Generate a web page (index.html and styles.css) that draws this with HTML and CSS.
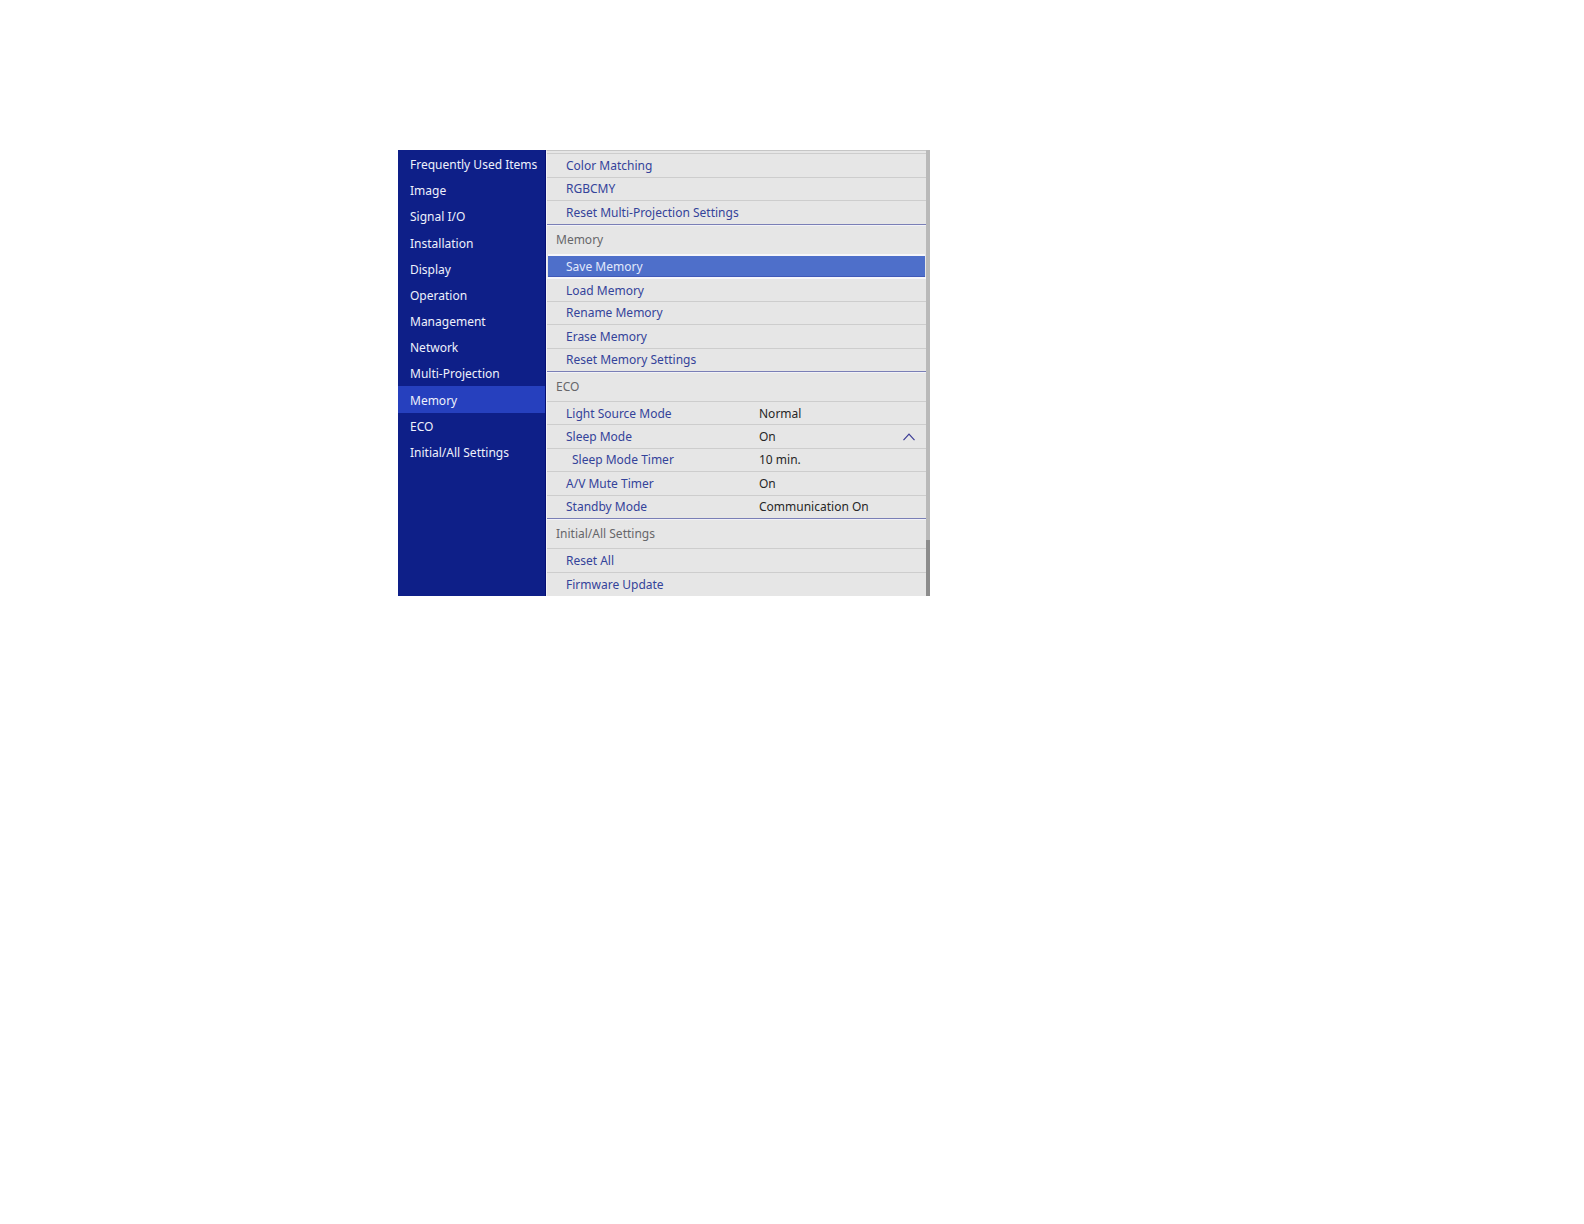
FILE: index.html
```html
<!DOCTYPE html>
<html lang="en">
<head>
    <meta charset="UTF-8">
    <title>Projector Menu</title>
    <link rel="stylesheet" href="styles.css">
</head>
<body>
    <main class="menu">
        <nav class="sidebar">
            <ul class="sidebar-list">
                <li><a href="#frequent">Frequently Used Items</a></li>
                <li><a href="#image">Image</a></li>
                <li><a href="#signal">Signal I/O</a></li>
                <li><a href="#installation">Installation</a></li>
                <li><a href="#display">Display</a></li>
                <li><a href="#operation">Operation</a></li>
                <li><a href="#management">Management</a></li>
                <li><a href="#network">Network</a></li>
                <li><a href="#multi-projection">Multi-Projection</a></li>
                <li><a href="#memory" class="active">Memory</a></li>
                <li><a href="#eco">ECO</a></li>
                <li><a href="#initial">Initial/All Settings</a></li>
            </ul>
        </nav>

        <div class="content">
            <!-- Multi-Projection (end of the section) -->
            <section class="section section-cut" id="multi-projection">
                <button type="button" class="row">Color Matching</button>
                <button type="button" class="row">RGBCMY</button>
                <button type="button" class="row">Reset Multi-Projection Settings</button>
            </section>

            <!-- Memory -->
            <section class="section section-full" id="memory">
                <h2>Memory</h2>
                <button type="button" class="row selected">Save Memory</button>
                <button type="button" class="row">Load Memory</button>
                <button type="button" class="row">Rename Memory</button>
                <button type="button" class="row">Erase Memory</button>
                <button type="button" class="row">Reset Memory Settings</button>
            </section>

            <!-- ECO -->
            <section class="section section-full" id="eco">
                <h2>ECO</h2>
                <button type="button" class="row"><span>Light Source Mode</span><span class="value">Normal</span></button>
                <button type="button" class="row" aria-expanded="true">
                    <span>Sleep Mode</span>
                    <span class="value">On</span>
                    <svg class="chevron" width="12" height="8" viewBox="0 0 12 8" aria-hidden="true">
                        <path d="M0.5 7.2 L6 1.2 L11.5 7.2" fill="none" stroke="#3c3c96" stroke-width="1.2"/>
                    </svg>
                </button>
                <button type="button" class="row"><span class="sub">Sleep Mode Timer</span><span class="value">10 min.</span></button>
                <button type="button" class="row"><span>A/V Mute Timer</span><span class="value">On</span></button>
                <button type="button" class="row"><span>Standby Mode</span><span class="value">Communication On</span></button>
            </section>

            <!-- Initial/All Settings -->
            <section class="section section-last" id="initial">
                <h2>Initial/All Settings</h2>
                <button type="button" class="row">Reset All</button>
                <button type="button" class="row">Firmware Update</button>
            </section>
        </div>

        <div class="scrollbar">
            <div class="thumb"></div>
        </div>
    </main>
</body>
</html>
```

FILE: styles.css
```css
* {
    box-sizing: border-box;
}

body {
    margin: 0;
    padding: 150px 20px 40px 398px;
    background-color: #fff;
    font-family: "Noto Sans", sans-serif;
    font-size: 12px;
    line-height: 16px;
}

.menu {
    display: flex;
    max-width: 532px;
}

/* Sidebar */
.sidebar {
    flex: 0 0 148px;
    padding-top: 1px;
    background-color: #0e1f88;
    border-right: 1px solid #050f72;
}

.sidebar-list {
    display: grid;
    grid-auto-rows: 1fr;
    min-height: 314px;
    margin: 0;
    padding: 0;
    list-style: none;
}

.sidebar-list a {
    display: flex;
    align-items: center;
    height: 100%;
    padding: 2px 0 0 12px;
    color: #eef1fc;
    text-decoration: none;
    white-space: nowrap;
}

.sidebar-list .active {
    background-color: #2640be;
}

/* Settings list */
.content {
    flex: 1;
    padding-top: 2px;
    background-color: #e6e6e6;
    border-top: 1px solid #c6c6c6;
    border-left: 1px solid #f2f2f6;
}

.section {
    display: grid;
    grid-template-rows: 29px;
    grid-auto-rows: 1fr;
    border-bottom: 1px solid #7a7fb6;
}

.section-cut {
    grid-template-rows: none;
    min-height: 72px;
}

.section-full {
    min-height: 147px;
}

.section-last {
    min-height: 77px;
    border-bottom: none;
}

h2 {
    display: flex;
    align-items: center;
    margin: 0;
    padding-left: 9px;
    border-top: 1px solid #f2f2f8;
    color: #66666a;
    font-size: 12px;
    font-weight: normal;
}

.row {
    display: grid;
    grid-template-columns: 193px 1fr auto;
    align-items: center;
    padding: 1px 11px 0 19px;
    background: none;
    border: none;
    border-top: 1px solid #cdcdcd;
    color: #34439a;
    font: inherit;
    text-align: left;
    white-space: nowrap;
}

.row.selected {
    margin: 0 1px;
    padding-left: 18px;
    background-color: #4e6fca;
    background-clip: padding-box;
    border-top: 2px solid #f6f6fa;
    border-bottom: 1px solid #4059b8;
    color: #e2e9fb;
}

.row.selected + .row {
    border-top: 2px solid #f6f6fa;
}

.sub {
    padding-left: 6px;
}

.value {
    color: #262626;
}

/* Scrollbar */
.scrollbar {
    display: flex;
    flex: 0 0 4px;
    flex-direction: column;
    justify-content: flex-end;
    background-color: #b9b9b9;
}

.thumb {
    height: 56px;
    background-color: #8c8c8c;
}
```
